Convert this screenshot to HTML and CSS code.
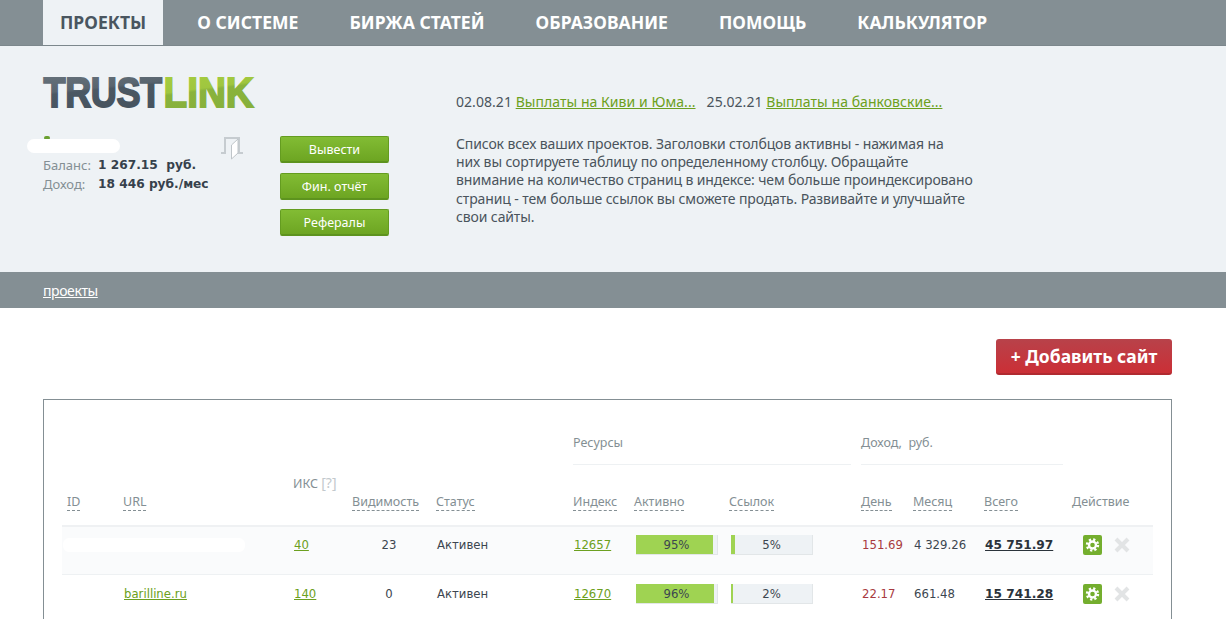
FILE: index.html
```html
<!DOCTYPE html>
<html lang="ru">
<head>
<meta charset="utf-8">
<title>Trustlink</title>
<link rel="stylesheet" href="styles.css">
</head>
<body>
<nav class="nav">
  <a class="nav-item nav-active">ПРОЕКТЫ</a>
  <a class="nav-item">О СИСТЕМЕ</a>
  <a class="nav-item">БИРЖА СТАТЕЙ</a>
  <a class="nav-item">ОБРАЗОВАНИЕ</a>
  <a class="nav-item">ПОМОЩЬ</a>
  <a class="nav-item">КАЛЬКУЛЯТОР</a>
</nav>
<header class="head">
  <div class="account">
    <svg class="logo" width="212" height="32" viewBox="0 0 212 32">
      <defs>
        <linearGradient id="gd" x1="0" y1="0" x2="0.25" y2="1"><stop offset="0" stop-color="#6b7780"/><stop offset="0.5" stop-color="#59656f"/><stop offset="0.55" stop-color="#4b5863"/><stop offset="1" stop-color="#46535f"/></linearGradient>
        <linearGradient id="gg" x1="0" y1="0" x2="0.25" y2="1"><stop offset="0" stop-color="#a8cf3f"/><stop offset="0.5" stop-color="#9fc63f"/><stop offset="0.55" stop-color="#8ab33c"/><stop offset="1" stop-color="#86b03b"/></linearGradient>
      </defs>
      <text class="logo-a" transform="translate(0.500 30.500) scale(0.840 1)">TRUST</text>
      <text class="logo-b" transform="translate(120.500 30.500) scale(0.900 1)">LINK</text>
    </svg>
    <div class="user">
      <div class="user-info">
        <div class="user-name"><span class="user-dot"></span><span class="blob blob-user"></span></div>
        <div class="stat"><span class="stat-label">Баланс:</span><b class="stat-val">1 267.15&nbsp; руб.</b></div>
        <div class="stat"><span class="stat-label">Доход:</span><b class="stat-val">18 446 руб./мес</b></div>
      </div>
      <svg class="door" width="24" height="24" viewBox="0 0 24 24" fill="none">
        <path d="M1 17h4V2h14v15h4" stroke="#c6ccd0" stroke-width="2"/>
        <path d="M11.500 9L18 3v14l-6.500 6z" fill="#fff" stroke="#bfc5c9"/>
      </svg>
    </div>
  </div>
  <div class="actions">
    <a class="btn-green">Вывести</a>
    <a class="btn-green">Фин. отчёт</a>
    <a class="btn-green">Рефералы</a>
  </div>
  <div class="info">
    <p class="news">02.08.21 <a class="link">Выплаты на Киви и Юма...</a> &nbsp; 25.02.21 <a class="link">Выплаты на банковские...</a></p>
    <p class="desc">Список всех ваших проектов. Заголовки столбцов активны - нажимая на<br>них вы сортируете таблицу по определенному столбцу. Обращайте<br>внимание на количество страниц в индексе: чем больше проиндексировано<br>страниц - тем больше ссылок вы сможете продать. Развивайте и улучшайте<br>свои сайты.</p>
  </div>
</header>
<div class="crumbs"><a class="crumb">проекты</a></div>
<main class="main">
  <div class="toolbar"><a class="btn-red">+ Добавить сайт</a></div>
  <section class="box">
    <table class="grid">
      <colgroup>
        <col class="c-id"><col class="c-url"><col class="c-iks"><col class="c-vis"><col class="c-st"><col class="c-idx"><col class="c-act"><col class="c-lnk"><col class="c-day"><col class="c-mon"><col class="c-tot"><col class="c-do">
      </colgroup>
      <thead>
        <tr class="group-row">
          <th colspan="5"></th>
          <th colspan="3"><div class="group group-res">Ресурсы</div></th>
          <th colspan="3"><div class="group group-inc">Доход, &nbsp;руб.</div></th>
          <th></th>
        </tr>
        <tr class="head-row">
          <th><span class="sort">ID</span></th>
          <th><span class="sort">URL</span></th>
          <th><span class="iks">ИКС <span class="q">[?]</span></span></th>
          <th><span class="sort">Видимость</span></th>
          <th><span class="sort">Статус</span></th>
          <th><span class="sort">Индекс</span></th>
          <th><span class="sort">Активно</span></th>
          <th><span class="sort">Ссылок</span></th>
          <th><span class="sort">День</span></th>
          <th><span class="sort">Месяц</span></th>
          <th><span class="sort">Всего</span></th>
          <th>Действие</th>
        </tr>
      </thead>
      <tbody>
        <tr class="row row-alt">
          <td></td>
          <td class="url-cell"><span class="blob blob-url"></span></td>
          <td><a class="link">40</a></td>
          <td class="center">23</td>
          <td>Активен</td>
          <td><a class="link">12657</a></td>
          <td><div class="bar bar-a"><span class="fill" style="width:95%"></span><span class="pct">95%</span></div></td>
          <td><div class="bar bar-l"><span class="fill" style="width:5%"></span><span class="pct">5%</span></div></td>
          <td class="red">151.69</td>
          <td>4 329.26</td>
          <td><a class="total">45 751.97</a></td>
          <td><div class="tools">
            <svg class="gear" width="19" height="20" viewBox="0 0 19 20"><rect width="19" height="20" rx="2" fill="#74ae2e"/><circle cx="9.500" cy="10" r="5.500" fill="none" stroke="#fff" stroke-width="2.400" stroke-dasharray="2.200 2.120"/><circle cx="9.500" cy="10" r="3.500" fill="none" stroke="#fff" stroke-width="2.400"/></svg>
            <svg class="cross" width="16" height="16" viewBox="0 0 16 16"><path d="M2 2l12 12M14 2L2 14" stroke="#e2e4e5" stroke-width="4"/></svg>
          </div></td>
        </tr>
        <tr class="row">
          <td></td>
          <td><a class="link">barilline.ru</a></td>
          <td><a class="link">140</a></td>
          <td class="center">0</td>
          <td>Активен</td>
          <td><a class="link">12670</a></td>
          <td><div class="bar bar-a"><span class="fill" style="width:96%"></span><span class="pct">96%</span></div></td>
          <td><div class="bar bar-l"><span class="fill" style="width:2%"></span><span class="pct">2%</span></div></td>
          <td class="red">22.17</td>
          <td>661.48</td>
          <td><a class="total">15 741.28</a></td>
          <td><div class="tools">
            <svg class="gear" width="19" height="20" viewBox="0 0 19 20"><rect width="19" height="20" rx="2" fill="#74ae2e"/><circle cx="9.500" cy="10" r="5.500" fill="none" stroke="#fff" stroke-width="2.400" stroke-dasharray="2.200 2.120"/><circle cx="9.500" cy="10" r="3.500" fill="none" stroke="#fff" stroke-width="2.400"/></svg>
            <svg class="cross" width="16" height="16" viewBox="0 0 16 16"><path d="M2 2l12 12M14 2L2 14" stroke="#e2e4e5" stroke-width="4"/></svg>
          </div></td>
        </tr>
      </tbody>
    </table>
  </section>
</main>
</body>
</html>
```
FILE: styles.css
```css
* { box-sizing: border-box; }
html, body { margin: 0; height: 619px; overflow: hidden; background: #fff; }
body { font-family: "Noto Sans", "DejaVu Sans", sans-serif; color: #3c4650; }
p { margin: 0; }

.nav { display: flex; gap: 17px; height: 46px; padding-left: 43px; background: #848f94; border-bottom: 1px solid #7c878c; }
.nav-item { padding: 0 17px; line-height: 45px; font-size: 17.500px; font-weight: 700; letter-spacing: 0.04px; color: #fff; }
.nav-active { background: #eef2f5; color: #4a5660; height: 45px; }

.head { display: flex; height: 226px; padding: 30px 0 0 43px; background: #eef2f5; }
.account { width: 237px; }
.logo { display: block; overflow: visible; }
.logo-a, .logo-b { font-family: "Liberation Sans", sans-serif; font-weight: 700; font-size: 43px; stroke-width: 1.800; }
.logo-a { fill: url(#gd); stroke: url(#gd); letter-spacing: -0.5px; }
.logo-b { fill: url(#gg); stroke: url(#gg); }
.user { display: flex; margin-top: 28px; width: 201px; justify-content: space-between; }
.user-name { position: relative; height: 20px; }
.user-dot { position: absolute; left: 1px; top: 0; width: 6px; height: 4px; background: #6aa030; border-radius: 2px; }
.blob { position: absolute; background: #fff; }
.blob-user { left: -16px; top: 3px; width: 93px; height: 14px; border-radius: 7px; }
.stat { display: flex; height: 19px; font-size: 13px; line-height: 19px; }
.stat-label { width: 55px; color: #848f94; }
.stat-val { font-family: "DejaVu Sans", sans-serif; font-size: 12.200px; color: #36414c; white-space: nowrap; }

.actions { display: flex; flex-direction: column; gap: 9.500px; width: 109px; padding-top: 60px; }
.btn-green { display: block; height: 27px; border-radius: 2px; border: 1px solid #649c20; border-bottom: 2px solid #5d931e; background: linear-gradient(#82bc34, #6da522); color: #fff; font-size: 12.500px; line-height: 25px; text-align: center; }

.info { margin-left: 67px; padding-top: 16px; font-size: 14px; color: #4a545c; white-space: nowrap; letter-spacing: -0.12px; }
.news { line-height: 20px; letter-spacing: 0.05px; }
.desc { margin-top: 23px; line-height: 18.200px; }
.link { color: #6ca020; text-decoration: underline; }

.crumbs { height: 36px; padding-left: 43px; background: #848f94; }
.crumb { color: #fff; font-size: 14px; line-height: 38px; text-decoration: underline; letter-spacing: -0.4px; }

.main { padding: 31px 54px 0 43px; }
.toolbar { display: flex; justify-content: flex-end; height: 60px; }
.btn-red { display: block; width: 176px; height: 36px; border-radius: 3px; background: linear-gradient(#b8424a, #cb2f36); border-bottom: 2px solid #b02a30; color: #fff; font-size: 17.500px; font-weight: 700; line-height: 34px; text-align: center; }

.box { border: 1px solid #848f94; padding: 0 18px 40px; }
.grid { width: 1091px; table-layout: fixed; border-collapse: separate; border-spacing: 0; font-family: "DejaVu Sans", sans-serif; font-size: 11.700px; color: #3c4650; }
.c-id { width: 56px; } .c-url { width: 170px; } .c-iks { width: 59px; } .c-vis { width: 84px; }
.c-st { width: 137px; } .c-idx { width: 61px; } .c-act { width: 95px; } .c-lnk { width: 132px; }
.c-day { width: 52px; } .c-mon { width: 71px; } .c-tot { width: 88px; } .c-do { width: 86px; }
th { padding: 0 0 0 5px; font-weight: 400; text-align: left; color: #848f94; white-space: nowrap; font-family: "Noto Sans", sans-serif; font-size: 12.500px; }
.group-row th { height: 65px; vertical-align: top; padding-top: 34px; }
.group { border-bottom: 1px solid #eef1f3; height: 31px; }
.group-res { margin-right: 5px; }
.group-inc { margin-right: 4px; }
.head-row th { height: 62px; vertical-align: top; padding-top: 28px; border-bottom: 2px solid #eff1f3; }
.sort { border-bottom: 1px dashed #848f94; }
.iks { position: relative; top: -20px; }
.q { color: #c3c9cd; font-size: 14px; }
.row td { height: 48px; padding: 8px 0 0 6px; vertical-align: top; line-height: 20px; white-space: nowrap; border-bottom: 1px solid #eef1f3; }
.row + .row td { padding-top: 9px; }
.row-alt td { background: #fafbfc; }
.url-cell { position: relative; }
.blob-url { left: -55px; top: 11px; width: 182px; height: 14px; border-radius: 6px; }
.row .center { text-align: center; padding-left: 0; }
.red { color: #a83a40; }
.total { font-weight: 700; font-size: 12.200px; color: #2b333b; text-decoration: underline; }
.bar { position: relative; height: 20px; border: 1px solid #e2e6e8; border-width: 0 1px 1px 0; background: #eef2f5; text-align: center; }
.bar-a { width: 82px; margin-left: 1px; }
.bar-l { width: 82px; margin-left: 1px; }
.fill { position: absolute; left: 0; top: 0; bottom: 0; background: #9fd352; }
.pct { position: relative; line-height: 19px; }
.tools { display: flex; align-items: center; gap: 12px; margin-left: 10px; }
.cross { flex: none; }
.gear { flex: none; }
```
